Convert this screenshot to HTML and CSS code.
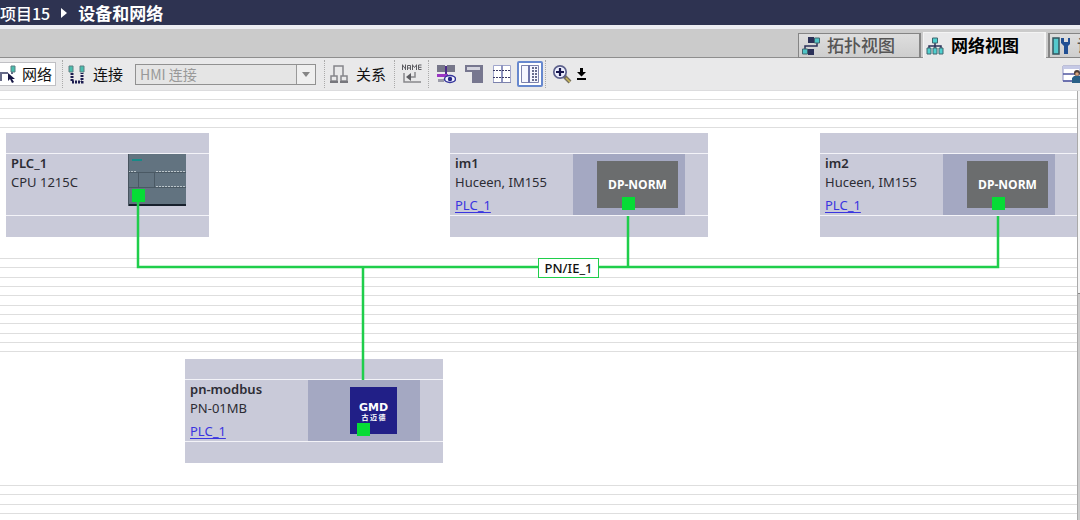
FILE: index.html
```html
<!DOCTYPE html>
<html lang="zh-CN">
<head>
<meta charset="utf-8">
<meta name="viewport" content="width=device-width, initial-scale=1">
<title>设备和网络</title>
<link rel="stylesheet" href="styles.css">
</head>
<body>
<div class="app">
  <header class="titlebar">
    <span>项目15</span>
    <svg class="crumb" width="6" height="10" viewBox="0 0 6 10"><path d="M0 0L6 5L0 10Z" fill="#fff"/></svg>
    <h1 class="title">设备和网络</h1>
  </header>

  <nav class="tabs">
    <button class="tab">
      <svg width="18" height="18" viewBox="0 0 18 18"><path d="M6 3h6M3 13V9h12V5M11 15H6" fill="none" stroke="#2b3158" stroke-width="1.5"/><path d="M6 0h6v6H6zM6 12h6v6H6z" fill="#2b3158"/><path d="M12.500 1h5v5h-5zM.5 12h5v5h-5z" fill="#4fc4c6" stroke="#41666f"/></svg>
      <span>拓扑视图</span>
    </button>
    <button class="tab tab-active">
      <svg width="18" height="18" viewBox="0 0 18 18"><path d="M9 5v8M3 12V9h12v3" fill="none" stroke="#2b3158" stroke-width="1.5"/><path d="M6.500 1h5v5h-5zM1 11h4v6H1zM7 11h4v6H7zM13 11h4v6h-4z" fill="#4fd0cf" stroke="#41666f"/></svg>
      <span>网络视图</span>
    </button>
    <button class="tab tab-cut">
      <svg width="18" height="18" viewBox="0 0 18 18"><path d="M1 1h6v16H1z" fill="#55c9cd" stroke="#33545e" stroke-width="1.500"/><path d="M9 1v5l3 3v8h4V9l3-3V1h-3v4h-4V1z" fill="#214f93"/></svg>
      <span>设备视图</span>
    </button>
  </nav>

  <div class="toolbar">
    <button class="mode mode-on">
      <svg width="16" height="18" viewBox="0 0 16 18"><path d="M0 8h8M12 6v3M1 9v7" fill="none" stroke="#343a61" stroke-width="1.500"/><path d="M11 1h4v6h-4z" fill="#48bfae" stroke="#5d7f82"/><path d="M8 8v8l2-2 2 4 2-1-2-3h3z" fill="#171745"/></svg>
      <span>网络</span>
    </button>
    <i class="sep"></i>
    <button class="mode mode-link">
      <svg width="18" height="19" viewBox="0 0 18 19"><path d="M4 8v9h10V8" fill="none" stroke="#1c1c50" stroke-width="3" stroke-dasharray="2 1"/><path d="M1 1h4v6H1zM12 1h4v6h-4z" fill="#48bfae" stroke="#5d7f82"/></svg>
      <span>连接</span>
    </button>
    <div class="combo">
      <select class="combo-field" aria-label="连接类型" disabled><option>HMI 连接</option></select>
      <span class="combo-arrow"><svg width="8" height="5" viewBox="0 0 8 5"><path d="M0 0h8L4 5z" fill="#858585"/></svg></span>
    </div>
    <i class="sep"></i>
    <button class="mode mode-rel">
      <svg width="18" height="18" viewBox="0 0 18 18"><path d="M4 11V1h9v10M1 11h6v5H1zM11 11h6v5h-6z" fill="none" stroke="#85858b" stroke-width="1.500"/><path d="M0 17h8M10 17h8" stroke="#77777d" stroke-width="2"/></svg>
      <span>关系</span>
    </button>
    <i class="sep"></i>
    <button class="tool" aria-label="显示名称">
      <svg width="20" height="20" viewBox="0 0 20 20"><path d="M.5 6V.5M3.500 6V.5M.5 1l3 4M5.500 6V1.500h3V6M5.500 4h3M10.500 6V.5M14.500 6V.5M10.500 1l2 2.500 2-2.500M19.500 1h-3v4.500h3M16.500 3.300h3" fill="none" stroke="#5c5c61"/><path d="M2 9v9h17M13 8v5H8" fill="none" stroke="#88888c" stroke-width="1.500"/><path d="M9 9v8l-5-4z" fill="#5c5c61"/></svg>
    </button>
    <i class="sep"></i>
    <button class="tool" aria-label="显示地址">
      <svg width="20" height="20" viewBox="0 0 20 20"><path d="M1 1h8v7H1zM11 1h8v7h-8z" fill="#77778a"/><path d="M10 2v9" stroke="#4c2a8a" stroke-width="2"/><path d="M1 10h11v3H1z" fill="#9a35c4"/><path d="M2 15h6v3H2z" fill="#9b9ba9"/><ellipse cx="14" cy="15" rx="5.500" ry="3.500" fill="#f4f4ff" stroke="#34349a" stroke-width="1.500"/><circle cx="14" cy="15" r="2.200" fill="#262688"/></svg>
    </button>
    <button class="tool" aria-label="页面">
      <svg width="20" height="20" viewBox="0 0 20 20"><path d="M1 1h18v18H8V8H1z" fill="#77778f"/><path d="M3 3h13v3H3z" fill="#d4d4de"/></svg>
    </button>
    <button class="tool" aria-label="网格">
      <svg width="20" height="20" viewBox="0 0 20 20"><path d="M1.500 1.500h17v17h-17z" fill="#fff" stroke="#a0a6cc"/><path d="M10 1v18" stroke="#8f95c0" stroke-width="2"/><path d="M1 6.500h18M1 13.500h18" stroke="#3a3a66" stroke-dasharray="2 1"/><path d="M1 18.500h18" stroke="#7c82ad"/></svg>
    </button>
    <button class="tool tool-on" aria-label="总览">
      <svg width="20" height="20" viewBox="0 0 20 20"><path d="M1.500 1.500h17v17h-17z" fill="#f6f7ff" stroke="#7d83ad"/><path d="M8 1h2v18H8z" fill="#6e75ab"/><path d="M13 3v15M16 3v15" stroke="#686d8e" stroke-width="2" stroke-dasharray="2 1"/></svg>
    </button>
    <i class="sep"></i>
    <button class="tool zoom" aria-label="缩放">
      <svg width="20" height="20" viewBox="0 0 20 20"><path d="M12 12l6 6" stroke="#77705f" stroke-width="4"/><path d="M14 14l4 4" stroke="#ccb95a" stroke-width="1.500"/><circle cx="8" cy="8" r="6.200" fill="#eef0ff" stroke="#5d618c" stroke-width="1.700"/><path d="M8 4v8M4 8h8" stroke="#17174e" stroke-width="2.200"/></svg>
      <svg width="9" height="12" viewBox="0 0 9 12"><path d="M3 0h3v4h3L4.500 8.500 0 4h3zM0 10h9v2H0z" fill="#000"/></svg>
    </button>
    <button class="tool overview" aria-label="用户视图">
      <svg width="18" height="18" viewBox="0 0 18 18"><path d="M1 1h17v15H1z" fill="#fff" stroke="#8f93c5"/><path d="M1 1h17v3H1z" fill="#c5c9e6"/><path d="M1 9h13M1 16h12" stroke="#5057a0" stroke-width="1.500"/><path d="M10 18v-5l2-2h6v7z" fill="#285f86"/><circle cx="15" cy="8" r="3" fill="#4b3d38"/><circle cx="15" cy="9" r="1.800" fill="#d9a47d"/></svg>
    </button>
  </div>

  <main class="canvas">
    <div class="rules rules-a"></div>
    <div class="rules rules-b"></div>
    <div class="rules rules-c"></div>

    <section class="node plc">
      <div class="node-body">
        <div class="node-text"><h2>PLC_1</h2><p>CPU 1215C</p></div>
        <svg class="plc-art" width="58" height="52" viewBox="0 0 58 52"><path d="M0 0h58v52H0z" fill="#627380"/><path d="M4 6h10" stroke="#178a88" stroke-width="2"/><path d="M0 17.500h8M28 17.500h30M28 32.500h30" stroke="#bcc6cb" stroke-dasharray="2 1"/><path d="M0 18.500h58M0 33.500h58M10.500 18v15M26.500 18v15" fill="none" stroke="#4a5964"/><path d="M0 51h58" stroke="#17202c" stroke-width="2"/><path d="M.5 0v52" stroke="#47545f"/></svg>
      </div>
    </section>

    <section class="node im1">
      <div class="node-body">
        <div class="node-text"><h2>im1</h2><p>Huceen, IM155</p><a href="#plc">PLC_1</a></div>
        <div class="slot"><div class="dp">DP-NORM</div></div>
      </div>
    </section>

    <section class="node im2">
      <div class="node-body">
        <div class="node-text"><h2>im2</h2><p>Huceen, IM155</p><a href="#plc">PLC_1</a></div>
        <div class="slot"><div class="dp">DP-NORM</div></div>
      </div>
    </section>

    <section class="node modbus">
      <div class="node-body">
        <div class="node-text"><h2>pn-modbus</h2><p>PN-01MB</p><a href="#plc">PLC_1</a></div>
        <div class="slot"><div class="gmd"><b>GMD</b><small>古 迈 德</small></div></div>
      </div>
    </section>

    <svg class="wires" width="1080" height="429" viewBox="0 0 1080 429">
      <path d="M138 108V176H998V125M628 125V176M363 176V289" fill="none" stroke="#1fce4b" stroke-width="2.500"/>
      <path d="M132 98h13v13h-13zM622 106h13v13h-13zM992 106h13v13h-13zM357 332h13v13h-13z" fill="#06dc36"/>
    </svg>
    <div class="net-label">PN/IE_1</div>
    <div class="scroll"><div class="scroll-thumb"></div></div>
  </main>
</div>
</body>
</html>
```

FILE: styles.css
```css
* { box-sizing: border-box; }

body {
  margin: 0;
  background: #fff;
  color: #111;
  font-family: "Noto Sans", "Noto Sans CJK SC", sans-serif;
}

button {
  margin: 0;
  padding: 0;
  border: 0;
  background: none;
  color: inherit;
  font: inherit;
}

svg { display: block; flex: none; }
h1, h2, p { margin: 0; }

.app {
  display: flex;
  flex-direction: column;
  min-height: 100vh;
  overflow: hidden;
}

.titlebar {
  display: flex;
  align-items: center;
  gap: 11px;
  height: 25px;
  background: #2e3351;
  color: #fff;
  font: 500 17px/24px "Noto Sans CJK SC", sans-serif;
  white-space: nowrap;
}

.titlebar span { font-size: 16px; }
.title { font-size: 17px; font-weight: 700; }

.tabs {
  display: flex;
  justify-content: flex-end;
  align-items: flex-end;
  gap: 2px;
  height: 33px;
  border-top: 4px solid #ecedf1;
  background: #cbcbcb;
  box-shadow: inset 0 -1px #8e8e8e;
  overflow: hidden;
}

.tab {
  display: flex;
  align-items: center;
  gap: 7px;
  flex: none;
  width: 123px;
  height: 25px;
  padding-left: 3px;
  border: 1px solid #858585;
  border-right-width: 2px;
  background: linear-gradient(#dedede, #cecece);
  color: #555;
  font: 500 17px/22px "Noto Sans CJK SC", sans-serif;
  white-space: nowrap;
  overflow: hidden;
}

.tab span { padding-bottom: 2px; }

.tab-active {
  height: 26px;
  padding-left: 2px;
  border-color: #f4f4f4;
  border-bottom: 0;
  background: #e9e9ea;
  color: #000;
  font-weight: 700;
}

.tab-cut { width: 32px; border-left-width: 2px; border-right: 0; padding-left: 2px; }

.toolbar {
  display: flex;
  align-items: center;
  height: 33px;
  background: #e9e9ea;
  border-bottom: 1px solid #dcdcde;
}

.mode {
  display: flex;
  align-items: center;
  gap: 7px;
  height: 24px;
  font: 15px/22px "Noto Sans CJK SC", sans-serif;
  white-space: nowrap;
}

.mode-on {
  width: 56px;
  gap: 6px;
  border: 1px solid #c0c0c4;
  border-left: 0;
  background: #fff;
}

.mode-link { margin: 0 12px 0 5px; }
.mode-rel { gap: 8px; margin: 0 2px 0 5px; }

.sep {
  flex: none;
  width: 1px;
  height: 28px;
  margin-left: 6px;
  border-left: 1px dotted #aaa;
}

.combo {
  display: flex;
  width: 181px;
  height: 21px;
  border: 1px solid #919191;
  background: #e5e5e5;
}

.combo + .sep { margin-left: 8px; }

.combo-field {
  flex: 1;
  appearance: none;
  padding: 0 4px;
  border: 0;
  background: none;
  color: #999;
  opacity: 1;
  font: 14px/19px "Noto Sans CJK SC", sans-serif;
}

.combo-arrow {
  display: flex;
  align-items: center;
  justify-content: center;
  width: 19px;
  border-left: 1px solid #999;
  background: #efefef;
}

.tool {
  display: flex;
  align-items: center;
  justify-content: center;
  gap: 5px;
  flex: none;
  width: 20px;
  height: 26px;
  margin-left: 8px;
}

.tool-on {
  width: 26px;
  margin: 0 -4px 0 5px;
  border: 2px solid #6788ce;
  border-radius: 2px;
  background: #fff;
}

.zoom { width: 34px; }
.overview { width: 18px; margin-left: auto; }

.sep + .tool { margin-left: 7px; }
.tool + .sep { margin-left: 6px; }
.sep + .tool.zoom { margin-left: 6px; }

.canvas {
  position: relative;
  flex: 1;
  min-height: 429px;
  overflow: hidden;
  background: #fff;
}

.rules {
  position: absolute;
  left: 0;
  right: 3px;
  background: linear-gradient(#dedede 1px, transparent 1px 9px, #dedede 9px 10px, transparent 10px 19px, #dedede 19px 20px, transparent 20px) 0 0 / 100% 28px;
}

.rules-a { top: 8px; height: 29px; }
.rules-b { top: 167px; height: 94px; }
.rules-c { top: 394px; height: 29px; }

.node {
  position: absolute;
  width: 258px;
  height: 104px;
  padding: 20px 0;
  background: #c9cad9;
}

.plc { left: 6px; top: 42px; width: 203px; }
.im1 { left: 450px; top: 42px; }
.im2 { left: 820px; top: 42px; }
.modbus { left: 185px; top: 268px; }

.node-body {
  display: flex;
  height: 63px;
  border-top: 1px solid #f3f3f8;
  border-bottom: 1px solid #f3f3f8;
}

.node-text {
  width: 123px;
  padding-left: 5px;
  font-size: 13px;
  line-height: 19px;
  color: #2c2c34;
  white-space: nowrap;
}

.plc .node-text { width: 122px; }
.node-text h2 { font-size: 13px; font-weight: 600; }
.node-text a { display: block; margin-top: 4px; color: #3a35e0; text-underline-offset: 2px; }

.slot {
  display: flex;
  align-items: center;
  justify-content: flex-end;
  width: 112px;
  padding-right: 7px;
  background: #a4a8c2;
}

.dp {
  width: 81px;
  height: 47px;
  background: #6b6d6e;
  color: #fff;
  font: 700 12px/47px "Open Sans", sans-serif;
  text-align: center;
}

.modbus .slot { padding-right: 23px; }

.gmd {
  display: flex;
  flex-direction: column;
  align-items: center;
  width: 47px;
  height: 47px;
  padding-top: 15px;
  background: #211f87;
  color: #fff;
  white-space: nowrap;
}

.gmd b { font: 700 11px/12px "DejaVu Sans", sans-serif; }
.gmd small { font: 700 7px/7px "Noto Sans CJK SC", sans-serif; }

.wires { position: absolute; left: 0; top: 0; }

.net-label {
  position: absolute;
  left: 538px;
  top: 167px;
  width: 61px;
  height: 20px;
  border: 1px solid #1fce4b;
  background: #fff;
  font-size: 13px;
  font-weight: 500;
  line-height: 18px;
  text-align: center;
}

.scroll {
  position: absolute;
  top: 0;
  right: 0;
  bottom: 0;
  width: 3px;
  border-left: 1px solid #aaa;
  background: #ccc;
}

.scroll-thumb {
  height: 203px;
  border-bottom: 1px solid #888;
  background: #f4f4f4;
}
```
